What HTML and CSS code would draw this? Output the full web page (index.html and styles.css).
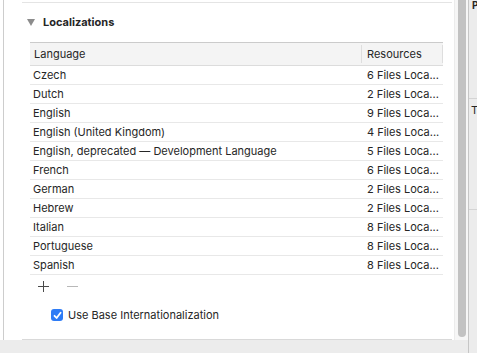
FILE: index.html
```html
<!DOCTYPE html>
<html>
<head>
<meta charset="utf-8">
<link rel="stylesheet" href="styles.css">
</head>
<body>
<div class="window">
  <div class="main">
    <div class="pane">
      <div class="topline"></div>
      <div class="section-head">
        <span class="disclosure"></span>
        <span class="section-title">Localizations</span>
      </div>
      <div class="table">
        <div class="thead">
          <div class="th th-lang">Language</div>
          <div class="th th-res">Resources</div>
        </div>
        <div class="row"><div class="cell lang">Czech</div><div class="cell res">6 Files Loca...</div></div>
        <div class="row"><div class="cell lang">Dutch</div><div class="cell res">2 Files Loca...</div></div>
        <div class="row"><div class="cell lang">English</div><div class="cell res">9 Files Loca...</div></div>
        <div class="row"><div class="cell lang">English (United Kingdom)</div><div class="cell res">4 Files Loca...</div></div>
        <div class="row"><div class="cell lang">English, deprecated — Development Language</div><div class="cell res">5 Files Loca...</div></div>
        <div class="row"><div class="cell lang">French</div><div class="cell res">6 Files Loca...</div></div>
        <div class="row"><div class="cell lang">German</div><div class="cell res">2 Files Loca...</div></div>
        <div class="row"><div class="cell lang">Hebrew</div><div class="cell res">2 Files Loca...</div></div>
        <div class="row"><div class="cell lang">Italian</div><div class="cell res">8 Files Loca...</div></div>
        <div class="row"><div class="cell lang">Portuguese</div><div class="cell res">8 Files Loca...</div></div>
        <div class="row"><div class="cell lang">Spanish</div><div class="cell res">8 Files Loca...</div></div>
      </div>
      <div class="addremove">
        <svg class="btn-add" width="11" height="11" viewBox="0 0 11 11"><path d="M5.5 0v11M0 5.5h11" stroke="#4a4a4a" stroke-width="1"/></svg>
        <svg class="btn-remove" width="11" height="11" viewBox="0 0 11 11"><path d="M0 5.5h11" stroke="#b8b8b8" stroke-width="1"/></svg>
      </div>
      <label class="check-row">
        <span class="checkbox">
          <svg width="9" height="9" viewBox="0 0 9 9"><path d="M1.5 4.8 L3.6 7 L7.6 1.8" fill="none" stroke="#fff" stroke-width="1.8" stroke-linecap="round" stroke-linejoin="round"/></svg>
        </span>
        <span class="check-label">Use Base Internationalization</span>
      </label>
      <div class="bottomline"></div>
    </div>
    <div class="scrolltrack"><div class="thumb"></div></div>
  </div>
  <div class="bottombar"></div>
  <div class="side">
    <div class="side-box top"><span class="side-title">P</span></div>
    <div class="side-box mid"><span class="side-t">T</span></div>
    <div class="side-box rest"></div>
  </div>
</div>
</body>
</html>
```

FILE: styles.css
```css
* { box-sizing: border-box; }
html, body { margin: 0; padding: 0; }
body {
  width: 477px;
  height: 353px;
  overflow: hidden;
  background: #fff;
  font-family: "Inter", "Liberation Sans", sans-serif;
  font-size: 11px;
  color: #262626;
}
.window {
  display: grid;
  grid-template-columns: 469px 8px;
  grid-template-rows: 340px 13px;
  width: 477px;
  height: 353px;
}
.main {
  grid-column: 1;
  grid-row: 1;
  display: flex;
  background: #fff;
}
.pane {
  width: 454px;
  margin-left: 3px;
  border-left: 1px solid #cdcdcd;
  display: flex;
  flex-direction: column;
}
.topline {
  height: 1px;
  background: #e4e4e4;
  margin: 2px 2px 0 18px;
}
.section-head {
  display: flex;
  align-items: center;
  height: 36px;
  padding-left: 23px;
  padding-top: 2px;
}
.disclosure {
  width: 0;
  height: 0;
  border-left: 4px solid transparent;
  border-right: 4px solid transparent;
  border-top: 7px solid #8c8c8c;
  margin-right: 8px;
}
.section-title {
  font-weight: 700;
  font-size: 11px;
  color: #262626;
}
.table {
  margin-left: 26px;
  width: 413px;
  margin-top: 3px;
}
.thead {
  display: flex;
  height: 24px;
  background: #f4f4f4;
  border-top: 1px solid #cbcbcb;
  border-bottom: 1px solid #dcdcdc;
}
.th {
  display: flex;
  align-items: center;
  position: relative;
}
.th-lang { width: 332px; padding-left: 4px; }
.th-res { width: 81px; padding-left: 5px; }
.th::after {
  content: "";
  position: absolute;
  right: 0;
  top: 2px;
  bottom: 2px;
  width: 1px;
  background: #dedede;
}
.row {
  display: flex;
  height: 19px;
  border-bottom: 1px solid #e8e8e8;
}
.cell {
  display: flex;
  align-items: center;
  white-space: nowrap;
}
.cell.lang { width: 332px; padding-left: 3px; }
.cell.res {
  width: 81px;
  padding-left: 5px;
}
.addremove {
  display: flex;
  align-items: center;
  gap: 18px;
  padding-left: 34px;
  height: 20px;
  margin-top: 1px;
}
.check-row {
  display: flex;
  align-items: center;
  margin-top: 12px;
  padding-left: 47px;
  height: 14px;
}
.checkbox {
  width: 12px;
  height: 12px;
  border-radius: 3px;
  background: #2e7cf6;
  display: flex;
  align-items: center;
  justify-content: center;
  margin-right: 5px;
}
.check-label { color: #262626; }
.bottomline {
  margin-top: auto;
  height: 1px;
  background: #d9d9d9;
  margin-left: 18px;
  margin-right: 2px;
}
.scrolltrack {
  width: 15px;
  background: #f6f6f6;
  border-left: 1px solid #ececec;
  border-right: 1px solid #c6c6c6;
  padding: 0 3px 0 3px;
}
.thumb {
  width: 8px;
  height: 337px;
  background: #c2c2c2;
  border-radius: 0 0 4px 4px;
}
.bottombar {
  grid-column: 1;
  grid-row: 2;
  background: #ececec;
  border-right: 1px solid #c6c6c6;
}
.side {
  grid-column: 2;
  grid-row: 1 / span 2;
  background: #ececec;
  display: flex;
  flex-direction: column;
}
.side-box.top {
  height: 99px;
  border-bottom: 1px solid #d4d4d4;
  padding-left: 3px;
  overflow: hidden;
}
.side-title {
  font-weight: 700;
  font-size: 10px;
  line-height: 10px;
  display: block;
  color: #262626;
}
.side-box.mid {
  height: 111px;
  border-bottom: 1px solid #d4d4d4;
  padding-left: 2px;
  overflow: hidden;
}
.side-t {
  display: block;
  font-size: 11px;
  margin-top: 4px;
}
.side-box.rest { flex: 1; }
```
